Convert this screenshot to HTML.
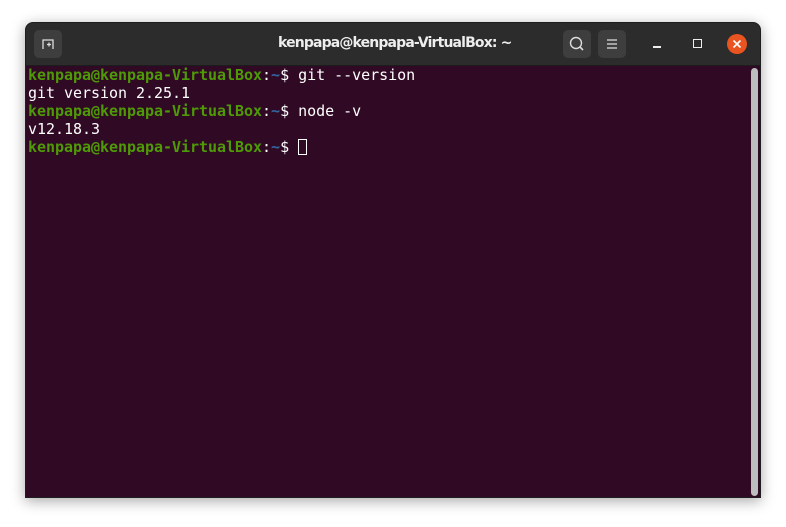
<!DOCTYPE html>
<html><head><style>
body{margin:0;width:786px;height:527px;background:#fff;position:relative;overflow:hidden}
.win{position:absolute;left:25px;top:22px;width:736px;height:476px;background:#300a24;border-radius:8px 8px 0 0;box-shadow:0 3px 14px rgba(0,0,0,.35);overflow:hidden;border:1px solid #1e1e1e;box-sizing:border-box}
.tb{position:absolute;left:0;top:0;right:0;height:42px;background:#2c2c2c;border-bottom:1px solid #1c1c1c}
.btn{position:absolute;top:7px;width:28px;height:28px;background:#3e3e3e;border-radius:5px}
.title{position:absolute;left:252px;top:12px;font:bold 14px "DejaVu Sans","Liberation Sans",sans-serif;color:#eee;letter-spacing:-0.85px}
.term{position:absolute;left:2px;top:43px;font:15px/18px "DejaVu Sans Mono","Liberation Mono",monospace;color:#fff;white-space:pre;letter-spacing:-0.03px}
.p{color:#4e9a06;font-weight:bold}.b{color:#3465a4;font-weight:bold}
.sb{position:absolute;left:725px;top:45px;width:7px;height:428px;background:#bdbdbd;border-radius:4px}
.cur{display:inline-block;width:9px;height:16px;border:1px solid #fff;vertical-align:-3px;box-sizing:border-box}
</style></head><body>
<div class="win">
<div class="tb">
<div class="btn" style="left:8px"><svg width="28" height="28"><path d="M9 19V10h10v9M13 14.5h4M15 12.5v4" stroke="#ddd" stroke-width="1.3" fill="none"/></svg></div>
<div class="title">kenpapa@kenpapa-VirtualBox: ~</div>
<div class="btn" style="left:537px"><svg width="28" height="28"><circle cx="13" cy="13" r="5.5" stroke="#ddd" stroke-width="1.4" fill="none"/><path d="M17 17l3 3" stroke="#ddd" stroke-width="1.6"/></svg></div>
<div class="btn" style="left:572px"><svg width="28" height="28"><path d="M9 10h10M9 14h10M9 18h10" stroke="#ddd" stroke-width="1.3"/></svg></div>
<div style="position:absolute;left:627px;top:23px;width:8px;height:1.5px;background:#eee"></div>
<div style="position:absolute;left:667px;top:16px;width:7px;height:7px;border:1.3px solid #eee"></div>
<div style="position:absolute;left:701px;top:11px;width:20px;height:20px;border-radius:50%;background:#e95420"><svg width="20" height="20"><path d="M6.5 6.5l7 7M13.5 6.5l-7 7" stroke="#fff" stroke-width="1.6"/></svg></div>
</div>
<div class="term"><span class="p">kenpapa@kenpapa-VirtualBox</span>:<span class="b">~</span>$ git --version
git version 2.25.1
<span class="p">kenpapa@kenpapa-VirtualBox</span>:<span class="b">~</span>$ node -v
v12.18.3
<span class="p">kenpapa@kenpapa-VirtualBox</span>:<span class="b">~</span>$ <span class="cur"></span></div>
<div class="sb"></div>
</div>
</body></html>
